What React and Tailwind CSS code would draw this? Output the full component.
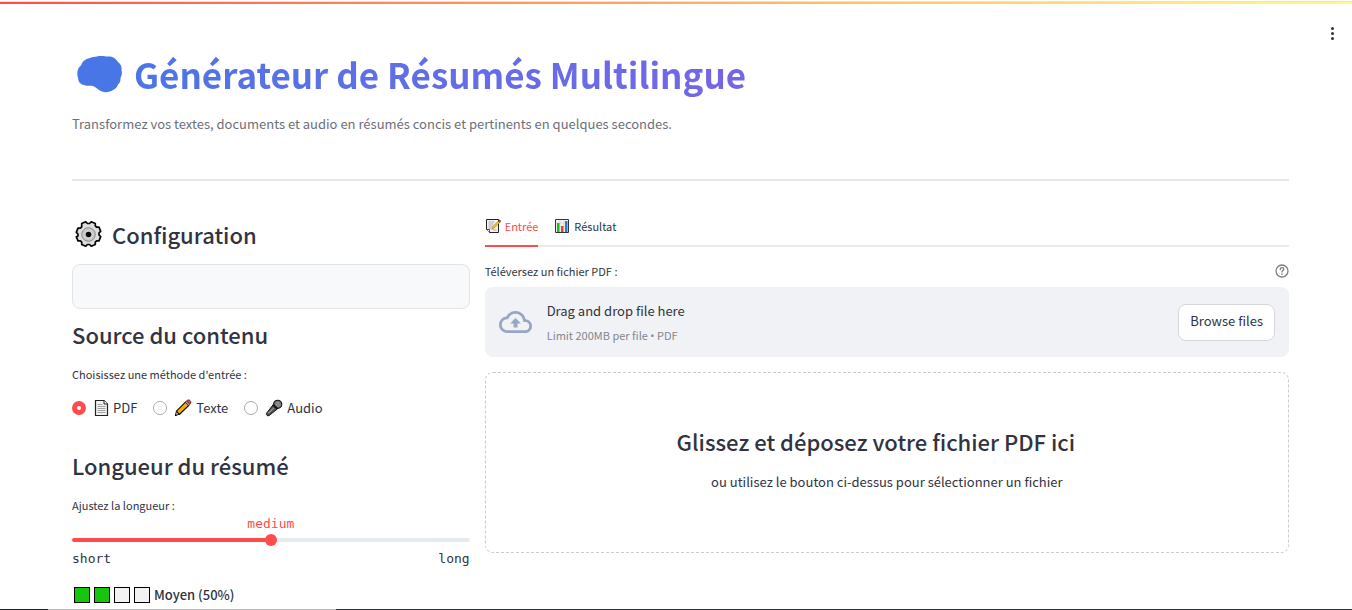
import { useState } from "react";

const h2 = "text-[22px] leading-10 font-medium text-[#31333f]";
const label = "block text-[11px] leading-5 text-[#31333f]";

function BrainIcon() {
  return (
    <svg className="h-10 w-12 shrink-0" viewBox="0 0 48 40" fill="#4876e6" aria-hidden="true">
      <path d="M14 3C17 1.500 19 2 21 1.500C25 .500 29 1.500 32 1.500C37 1 40 4 42 7C45 9 46 12 45.500 15.500C46.500 18 45.500 21 44.500 23C44.500 26 44 28 42 29.500C41 32 40 34 37 35C34 37 30 38 26 36.500C23 35.500 21 33 18 31.500C15 30 12 31.500 8 30C4 29.500 2 26 2 22.500C.500 18 1.500 13 5 10.500C6 6.500 9 4 14 3Z" />
    </svg>
  );
}

function GearIcon() {
  return (
    <svg className="h-8 w-8 shrink-0" viewBox="0 0 32 32" aria-hidden="true">
      <path
        d="M13.300 2.800l1.700 1.700h2l1.700-1.700 4.100 1.700v2.400l1.300 1.300h2.400l1.700 4.100-1.700 1.700v2l1.700 1.700-1.700 4.100h-2.400l-1.300 1.300v2.400l-4.100 1.700-1.700-1.700h-2l-1.700 1.700-4.100-1.700v-2.400l-1.300-1.300H5.500l-1.700-4.100L5.500 17v-2l-1.700-1.700 1.700-4.100h2.400l1.300-1.300V4.500z"
        transform="translate(.5 1)"
        fill="#dedede"
        stroke="#050505"
        strokeWidth="1.700"
        strokeLinejoin="round"
      />
      <circle cx="16.500" cy="16.500" r="6.800" fill="#c9c9c9" stroke="#777" strokeWidth=".8" />
      <circle cx="16.500" cy="16.500" r="4.300" fill="#d4d4d4" />
      <circle cx="16.500" cy="16.500" r="2.800" fill="#080808" />
    </svg>
  );
}

function DocIcon() {
  return (
    <svg className="h-[18px] w-4 shrink-0" viewBox="0 0 16 18" aria-hidden="true">
      <path d="M2.500 1.500h8.500l3.500 3.500v11.500H2.500z" fill="#f2f2f2" stroke="#222" strokeWidth="1.200" />
      <path d="M11 1.500V5h3.500" fill="#fff" stroke="#222" />
      <path d="M4.500 5.500h5M4.500 7.500h8M4.500 9.500h8M4.500 11.500h8M4.500 13.500h8" stroke="#a2a2a2" />
    </svg>
  );
}

function PencilIcon() {
  return (
    <svg className="h-[18px] w-[18px] shrink-0" viewBox="0 0 18 18" aria-hidden="true">
      <path d="M1.300 16.500l1.200-4.300 3 3z" fill="#f6d7a4" stroke="#111" strokeWidth="1" strokeLinejoin="round" />
      <path d="M2.500 12.200L11.500 3.200l3.200 3.200-9.200 8.900z" fill="#ffb900" stroke="#111" strokeWidth="1.200" />
      <path d="M4 13.600l9-8.900" stroke="#e88b00" strokeWidth=".6" />
      <path d="M11.500 3.200l1.200-1.200 3.200 3.200-1.200 1.200z" fill="#c8c8c8" stroke="#222" strokeWidth=".7" />
      <path d="M12.700 2c1-1.300 2.600-1.300 3.500-.3s.9 2.300-.3 3.500z" fill="#ef4b50" stroke="#4a1518" strokeWidth=".9" />
      <path d="M1 17l.5-2 1.500 1.500z" fill="#000" />
    </svg>
  );
}

function MicIcon() {
  return (
    <svg className="h-[18px] w-[18px] shrink-0" viewBox="0 0 18 18" aria-hidden="true">
      <path d="M8.300 5.500l4.200 4.300-8.500 6.800c-1.300.9-3.400-1-2.500-2.300z" fill="#4e4e4e" stroke="#111" strokeLinejoin="round" />
      <path d="M3.200 14.200l6-5.600" stroke="#999" strokeWidth="1.200" />
      <circle cx="12.700" cy="5.300" r="4.100" fill="#777" stroke="#111" strokeWidth="1.100" />
      <path d="M10 4.500l3.500 3.500M11.500 3l3.500 3.500M10 7l4-4M12 8.500l3.500-3.500" stroke="#aaa" strokeWidth=".6" />
      <path d="M8.400 5.600l4.200 4.200" stroke="#111" strokeWidth="1.500" />
    </svg>
  );
}

function MemoIcon() {
  return (
    <svg className="h-4 w-4 shrink-0" viewBox="0 0 16 16" aria-hidden="true">
      <path d="M1.500 1.500h12v13h-9l-3-3z" fill="#f1f1f1" stroke="#222" />
      <path d="M1.500 11.500h3v3" fill="#fff" stroke="#222" strokeWidth=".8" />
      <path d="M3.500 4h6M3.500 6h5M3.500 8h4M3.500 10h2.500M8 12h3.500" stroke="#999" strokeWidth=".8" />
      <path d="M6.500 11.200l1-2.500L13.300 3l1.500 1.500L9 10.200z" fill="#ffbd17" stroke="#665018" strokeWidth=".4" />
      <path d="M13.300 3l.8-.8c.8-.6 1.900.5 1.500 1.500l-.8.8z" fill="#ef4b50" stroke="#222" strokeWidth=".5" />
    </svg>
  );
}

function ChartIcon() {
  return (
    <svg className="h-4 w-4 shrink-0" viewBox="0 0 16 16" aria-hidden="true">
      <path d="M1.500 1.500h13v13h-13z" fill="#f3f3f3" stroke="#333" />
      <path d="M6 2v12M10 2v12M2 5h12M2 8.500h12" stroke="#ccc" strokeWidth=".6" />
      <path d="M3 5h2.500v9H3z" fill="#16c60c" />
      <path d="M7 8h2.500v6H7z" fill="#e8413b" />
      <path d="M11 3h2.500v11H11z" fill="#1a83d8" />
    </svg>
  );
}

function CloudIcon() {
  return (
    <svg className="h-9 w-[33px] shrink-0" viewBox="0 0 24 24" fill="#97a6c3" aria-hidden="true">
      <path d="M19.350 10.040A7.490 7.490 0 0 0 12 4C9.110 4 6.600 5.640 5.350 8.040A5.994 5.994 0 0 0 0 14c0 3.310 2.690 6 6 6h13c2.760 0 5-2.240 5-5 0-2.640-2.050-4.780-4.650-4.960zM19 18H6c-2.210 0-4-1.790-4-4 0-2.050 1.530-3.760 3.560-3.970l1.070-.110.500-.950A5.469 5.469 0 0 1 12 6c2.620 0 4.880 1.860 5.390 4.430l.300 1.500 1.530.110A2.980 2.980 0 0 1 22 15c0 1.650-1.350 3-3 3zM8 13h2.550v3h2.900v-3H16l-4-4z" />
    </svg>
  );
}

function HelpIcon() {
  return (
    <svg className="h-[14px] w-[14px]" viewBox="0 0 14 14" fill="none" stroke="#7c7e87" strokeWidth="1.300" strokeLinecap="round" aria-hidden="true">
      <circle cx="7" cy="7" r="6" />
      <path d="M5.200 5.500C5.200 4.300 6 3.700 7 3.700s1.800.700 1.800 1.600C8.800 6.500 7 6.700 7 8" />
      <path d="M7 10.100v.1" strokeWidth="1.500" />
    </svg>
  );
}

const sources = [
  { id: "pdf", text: "PDF", Icon: DocIcon },
  { id: "texte", text: "Texte", Icon: PencilIcon },
  { id: "audio", text: "Audio", Icon: MicIcon },
];

const levels = ["short", "medium", "long"];

function Configuration() {
  const [source, setSource] = useState("pdf");
  const [level, setLevel] = useState(1);
  return (
    <section className="w-[calc(33.333%-8px)] shrink-0">
      <h2 className={`${h2} flex items-center gap-2`}>
        <GearIcon />
        Configuration
      </h2>
      <div className="mt-[10px] h-[45px] rounded-lg border border-[#e2e4e6] bg-[#f8f9fb]" />
      <h2 className={`${h2} mt-[5px]`}>Source du contenu</h2>
      <fieldset className="mt-[10px]">
        <legend className={label}>Choisissez une méthode d'entrée :</legend>
        <div className="mt-3 flex gap-4">
          {sources.map(({ id, text, Icon }) => (
            <label key={id} className="flex items-center gap-[7px] text-[13px] leading-6">
              <input
                type="radio"
                name="source"
                checked={source === id}
                onChange={() => setSource(id)}
                className="h-[14px] w-[14px] appearance-none rounded-full border border-[#a9aab0] bg-white checked:border-[5px] checked:border-[#ff4b4b]"
              />
              <span className="flex items-center gap-1">
                <Icon />
                {text}
              </span>
            </label>
          ))}
        </div>
      </fieldset>
      <h2 className={`${h2} mt-[25px]`}>Longueur du résumé</h2>
      <label htmlFor="length" className={`${label} mt-[10px]`}>
        Ajustez la longueur :
      </label>
      <div className="font-['DejaVu_Sans_Mono','Liberation_Mono',monospace] text-[13px]">
        <output htmlFor="length" className="block text-center leading-[17px] text-[#ff4b4b]">
          {levels[level]}
        </output>
        <input
          id="length"
          type="range"
          min="0"
          max="2"
          value={level}
          onChange={(e) => setLevel(Number(e.target.value))}
          style={{ "--fill": `${level * 50}%` }}
          className="block h-4 w-full appearance-none bg-transparent [&::-webkit-slider-runnable-track]:h-1 [&::-webkit-slider-runnable-track]:rounded-full [&::-webkit-slider-runnable-track]:bg-[linear-gradient(to_right,#ff4b4b_var(--fill),#e6eaf1_var(--fill))] [&::-webkit-slider-thumb]:-mt-1 [&::-webkit-slider-thumb]:h-3 [&::-webkit-slider-thumb]:w-3 [&::-webkit-slider-thumb]:appearance-none [&::-webkit-slider-thumb]:rounded-full [&::-webkit-slider-thumb]:bg-[#ff4b4b]"
        />
        <div className="flex justify-between leading-[22px]">
          <span>short</span>
          <span>long</span>
        </div>
      </div>
      <p className="mt-[13px] flex items-center gap-1 text-[13px] leading-6 font-medium">
        <span className="flex gap-1 pl-[2px]">
          <span className="h-4 w-4 border border-black bg-[#16c60c]" />
          <span className="h-4 w-4 border border-black bg-[#16c60c]" />
          <span className="h-4 w-4 border border-black bg-[#f2f2f2]" />
          <span className="h-4 w-4 border border-black bg-[#f2f2f2]" />
        </span>
        Moyen (50%)
      </p>
    </section>
  );
}

function InputPanel() {
  const tab = "-mb-[2px] flex items-center gap-1 border-b-2 pt-[2px] pb-[9px]";
  return (
    <section className="min-w-0 flex-1">
      <div role="tablist" className="flex gap-4 border-b-2 border-[#eaebed] text-[11px] leading-5">
        <button role="tab" aria-selected="true" className={`${tab} border-[#ff4b4b] text-[#ff4b4b]`}>
          <MemoIcon />
          Entrée
        </button>
        <button role="tab" aria-selected="false" className={`${tab} border-transparent`}>
          <ChartIcon />
          Résultat
        </button>
      </div>
      <div className="mt-[14px] flex items-center justify-between">
        <label htmlFor="upload" className={label}>
          Téléversez un fichier PDF :
        </label>
        <button aria-label="Aide">
          <HelpIcon />
        </button>
      </div>
      <div className="mt-[6px] flex h-[70px] items-center rounded-lg bg-[#f0f2f6] px-[14px]">
        <CloudIcon />
        <div className="ml-[15px] flex-1 pt-[2px]">
          <p className="text-[13px] leading-6">Drag and drop file here</p>
          <p className="text-[11px] leading-6 text-[#84868f]">
            Limit 200MB per file <span className="font-['Open_Sans']">•</span> PDF
          </p>
        </div>
        <input id="upload" type="file" accept="application/pdf" className="hidden" />
        <button className="rounded-lg border border-[#d6d7db] bg-white px-[11px] pt-1 pb-[7px] text-[13px] leading-6">Browse files</button>
      </div>
      <div className="mt-[15px] rounded-lg border border-dashed border-[#cccccc] pt-12 pb-[58px] text-center">
        <h2 className={`${h2} pr-[22px]`}>Glissez et déposez votre fichier PDF ici</h2>
        <p className="mt-[9px] text-[13px] leading-6">ou utilisez le bouton ci-dessus pour sélectionner un fichier</p>
      </div>
    </section>
  );
}

export default function App() {
  return (
    <div className="flex min-h-screen flex-col bg-white font-['Noto_Sans_CJK_SC','Noto_Sans',sans-serif] text-[#31333f]">
      <div className="h-1 border-t border-white bg-linear-to-r from-[#ff4b4b] to-[#fffd80] bg-clip-padding">
        <div className="h-px bg-[#e3e3e6]" />
      </div>
      <header className="flex h-12 items-center justify-end pt-3 pr-[18px] pb-px">
        <button aria-label="Menu" className="flex flex-col gap-[2px]">
          <span className="h-[3px] w-[3px] rounded-full bg-[#31333f]" />
          <span className="h-[3px] w-[3px] rounded-full bg-[#31333f]" />
          <span className="h-[3px] w-[3px] rounded-full bg-[#31333f]" />
        </button>
      </header>
      <main className="flex-1 pr-[63px] pl-[72px]">
        <h1 className="flex items-center gap-[10px] pl-1 text-[35px] leading-[46px] font-bold">
          <BrainIcon />
          <span className="flex-1 bg-linear-to-r from-[#4b75e6] to-[#8e54e9] bg-clip-text pb-[3px] leading-[43px] text-transparent">Générateur de Résumés Multilingue</span>
        </h1>
        <p className="mt-4 text-[13px] leading-5 text-[#6d6f78]">Transformez vos textes, documents et audio en résumés concis et pertinents en quelques secondes.</p>
        <hr className="mt-[45px] border-t-2 border-[#e6e7e9]" />
        <div className="mt-[33px] flex gap-[15px]">
          <Configuration />
          <InputPanel />
        </div>
      </main>
      <div className="flex h-px">
        <div className="w-12 bg-[#20222c]" />
        <div className="w-72 bg-[#bfbfbf]" />
        <div className="flex-1 bg-[#32343c]" />
      </div>
    </div>
  );
}
